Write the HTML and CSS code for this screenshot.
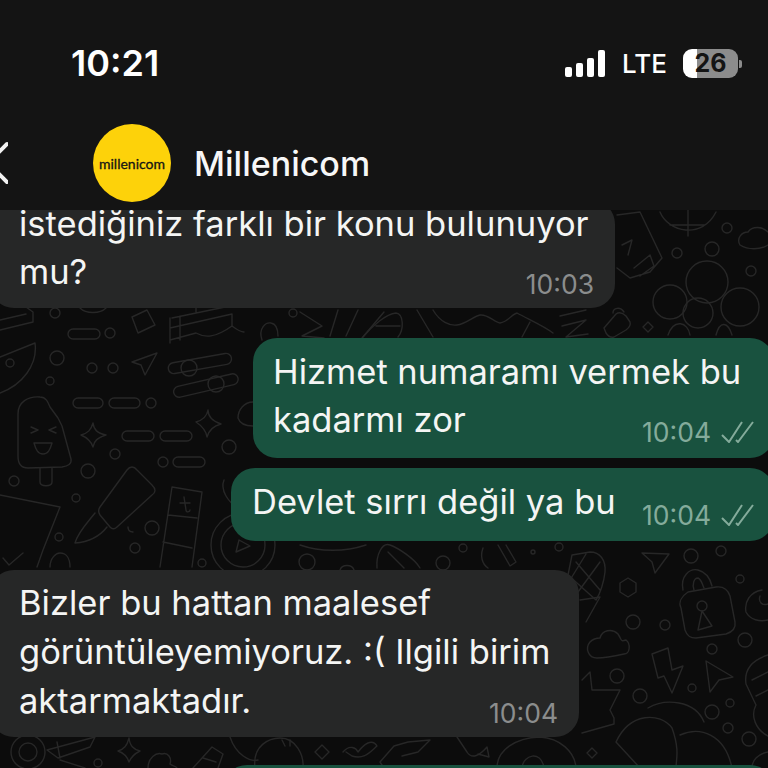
FILE: index.html
```html
<html lang="en">

<head>
  <meta charset="utf-8" />
  <title>Millenicom</title>
  <meta name="viewport" content="width=device-width, initial-scale=1" />
  <link rel="stylesheet" href="styles.css">
</head>

<body>
  <div class="screen">
    <!-- chat wallpaper, sits behind the bubbles -->
    <svg class="wallpaper" viewBox="0 0 768 768" width="768" height="768">
      <g fill="none" stroke="#272727" stroke-width="1.4" stroke-linejoin="round" stroke-linecap="round">
        <!-- left column -->
        <path d="M0 330 33 322V312L26 307M0 320 26 314" />
        <circle cx="55" cy="313" r="5" />
        <path d="M80 308C86 314 100 314 106 308" />
        <path d="M132 317 147 310 155 325 138 333Z" />
        <path d="M170 328 232 314M172 318 230 306M170 318V343M180 316V340M196 312V304M232 314V326C240 332 243 332 244 332M170 340 196 333C205 338 215 338 232 326" />
        <path d="M262 340C258 328 266 322 271 323 277 324 278 330 278 336" />
        <circle cx="293" cy="313" r="4" />
        <path d="M300 312 322 326 302 336 324 338M338 310 330 336M358 310 346 336M384 312 362 338" />
        <rect x="68" y="329" width="32" height="10" rx="5" />
        <circle cx="110" cy="333" r="5" />
        <path d="M35 343C38 365 22 385 0 393M0 357 35 343" />
        <circle cx="10" cy="363" r="4" />
        <circle cx="57" cy="358" r="7" />
        <circle cx="92" cy="368" r="5" />
        <circle cx="113" cy="368" r="5" />
        <circle cx="50" cy="381" r="4" />
        <path d="M132 362 157 353 145 375 141 365Z" />
        <rect x="168" y="358" width="64" height="11" rx="5.5" transform="rotate(-10 200 364)" />
        <circle cx="189" cy="368" r="8" />
        <rect x="173" y="380" width="66" height="11" rx="5.5" transform="rotate(-13 206 386)" />
        <circle cx="216" cy="384" r="8" />
        <rect x="73" y="398" width="30" height="10" rx="5" />
        <rect x="109" y="398" width="31" height="10" rx="5" />
        <circle cx="151" cy="403" r="5" />
        <rect x="122" y="431" width="32" height="10" rx="5" />
        <rect x="160" y="431" width="32" height="10" rx="5" />
        <rect x="173" y="457" width="32" height="10" rx="5" />
        <path d="M18 414C18 402 28 396 40 397 46 397 48 402 50 407L58 418 62 426 71 459C72 464 68 466 62 467L28 468C20 468 18 462 18 456Z" />
        <path d="M40 468V482C40 487 52 487 52 482V468" />
        <path d="M31 427 38 430 31 433M56 427 49 430 56 433" />
        <path d="M34 443H52C50 450 48 454 43 454 38 454 36 450 34 443Z" />
        <path d="M93 423C94 430 97 433 106 435 97 438 94 441 93 447 91 441 88 438 81 435 88 433 91 430 93 423Z" />
        <path d="M208 410C208 417 212 421 221 424 213 426 209 430 207 437 206 430 202 426 196 422 203 420 207 416 208 410Z" />
        <path d="M253 402C244 402 238 410 238 418 240 424 246 426 253 426" />
        <circle cx="115" cy="454" r="5" />
        <circle cx="229" cy="447" r="7" />
        <circle cx="163" cy="462" r="5" />
        <circle cx="88" cy="471" r="7" />
        <circle cx="14" cy="481" r="5" />
        <circle cx="76" cy="498" r="4" />
        <path d="M100 507 127 470C130 466 134 466 137 470L152 485C156 489 156 492 152 495L117 527C114 530 112 529 110 527L100 515C98 512 98 510 100 507Z" />
        <path d="M95 513C88 522 78 532 75 543 88 542 100 536 107 527" />
        <path d="M128 527C128 530 130 532 133 532" />
        <path d="M172 487 202 492 192 567M172 487 160 567M168 515 197 518M163 542 192 548" />
        <path d="M184 497 186 510C186 513 190 512 190 510M180 503H190" />
        <circle cx="152" cy="528" r="7" />
        <circle cx="135" cy="548" r="5" />
        <circle cx="59" cy="537" r="4" />
        <path d="M0 495 60 507 43 550 37 567M3 558 9 565 23 553" />
        <path d="M50 567C50 558 56 553 60 553 66 553 70 558 70 567" />
        <path d="M224 480C220 490 228 502 238 508" />
        <circle cx="243" cy="545" r="32" />
        <circle cx="243" cy="545" r="22" />
        <path d="M236 552 239 540 250 546Z" />
        <circle cx="202" cy="563" r="4" />

        <!-- middle strips -->
        <path d="M363 337C372 326 386 314 396 313 404 314 404 330 398 337M376 326H400" />
        <path d="M417 310 433 337M433 310C440 322 450 326 457 325 466 324 474 316 480 315 488 314 494 322 500 323 508 322 512 314 517 313 530 320 544 326 553 333M530 322 522 337" />
        <path d="M560 316 586 310M562 326 586 320 566 337 588 334" />
        <circle cx="307" cy="562" r="8" />
        <path d="M340 570C342 564 352 564 354 570" />
        <path d="M377 568C376 555 382 542 390 545 398 548 414 558 420 568M388 552 404 568" />
        <circle cx="443" cy="563" r="7" />
        <circle cx="463" cy="548" r="4" />
        <path d="M483 548C480 556 482 564 488 568M498 545 510 566 516 562 506 545" />
        <circle cx="533" cy="552" r="2" />
        <circle cx="559" cy="547" r="4" />
        <path d="M300 545C320 552 345 552 366 545" />

        <!-- right of the first bubble -->
        <path d="M660 212C668 232 702 240 716 212M688 210V236M670 225 705 225" />
        <path d="M617 215 640 212 662 258 650 272 630 278 617 268M622 245 632 240 628 255M634 268 650 255 654 266 640 276" />
        <circle cx="727" cy="228" r="5" />
        <circle cx="712" cy="249" r="7" />
        <circle cx="677" cy="253" r="5" />
        <circle cx="751" cy="271" r="5" />
        <path d="M740 245C736 238 742 232 748 232 752 226 762 226 768 232M740 245C748 250 760 250 768 245" />
        <circle cx="707" cy="282" r="21" />
        <circle cx="670" cy="302" r="17" />
        <circle cx="698" cy="313" r="15" />
        <circle cx="740" cy="307" r="19" />
        <path d="M668 335C674 318 688 322 690 335M716 335C720 320 728 322 732 335" />
        <path d="M604 328 616 314C620 311 623 313 626 316L630 322C631 325 630 327 626 330L614 337C610 338 608 336 606 333ZM613 313C613 308 620 306 624 312" />
        <path d="M648 322 653 327 648 332 643 327Z" />

        <!-- lower right -->
        <path d="M590 552C600 552 606 560 605 572 604 582 600 594 596 600L568 575 572 555ZM576 562 600 590M586 554 570 580M600 562 578 592" />
        <path d="M580 600 600 597 586 622" />
        <path d="M642 553 669 554 655 573 652 562Z" />
        <circle cx="691" cy="556" r="7" />
        <circle cx="721" cy="551" r="5" />
        <path d="M628 578 636 583 636 592 628 597 620 592 620 583Z" />
        <path d="M681 608C678 602 682 596 688 592L716 587C724 586 728 590 730 596L735 622C736 628 732 632 726 634L696 638C690 638 687 636 685 630Z" />
        <path d="M683 590C680 576 690 568 698 570 706 572 710 578 712 586M694 590C692 584 694 578 698 578 702 580 702 584 704 588" />
        <circle cx="702" cy="606" r="5" />
        <path d="M702 611 712 626 698 630Z" />
        <circle cx="633" cy="622" r="7" />
        <circle cx="665" cy="625" r="5" />
        <circle cx="745" cy="640" r="7" />
        <circle cx="712" cy="649" r="5" />
        <circle cx="740" cy="579" r="4" />
        <path d="M762 590C750 592 744 602 746 612 750 620 760 622 768 620M768 604C762 606 758 602 760 596" />
        <path d="M597 658C588 658 585 648 590 642 594 638 598 638 600 638 602 630 612 628 618 634 622 640 620 642 626 640 631 644 630 654 624 654 615 656 606 658 597 658Z" />
        <path d="M652 654 668 648 672 670 683 666 672 693 664 676 658 678Z" />
        <path d="M706 661 733 677 719 680 710 692Z" />
        <circle cx="617" cy="676" r="7" />
        <circle cx="640" cy="696" r="7" />
        <circle cx="692" cy="688" r="4" />
        <circle cx="730" cy="703" r="4" />
        <circle cx="712" cy="712" r="7" />
        <circle cx="728" cy="728" r="5" />
        <circle cx="749" cy="739" r="7" />
        <path d="M592 748 597 753 592 758 587 753Z" />
        <path d="M582 680 590 672 592 690 606 690 620 690 610 710 614 718 614 724 582 733" />
        <path d="M616 742C630 712 660 712 672 728 680 750 676 760 676 768M616 742 640 768" />
        <path d="M648 708C665 698 695 700 704 722M680 735C700 726 725 734 732 768" />
        <path d="M768 655C752 660 744 670 746 684L756 705C750 716 756 730 768 736M752 680 768 672M756 696 768 690" />
        <path d="M768 752C758 754 752 760 752 768" />

        <!-- bottom strip -->
        <circle cx="28" cy="752" r="9" />
        <circle cx="28" cy="752" r="17" />
        <path d="M47 750 95 737 90 747 58 758 47 750ZM57 742 60 758M60 760 85 768" />
        <path d="M129 738C130 746 133 749 140 751 134 754 131 757 129 762 127 756 124 753 118 751 124 749 127 746 129 738Z" />
        <circle cx="98" cy="763" r="4" />
        <path d="M148 768C148 758 156 752 162 754 168 752 172 758 170 764 172 766 176 766 177 768" />
        <path d="M193 768 212 747 223 754 218 768M203 758 216 762" />
        <path d="M230 737C236 755 250 762 258 760" />
        <path d="M255 768C252 745 270 738 280 738 296 738 304 755 303 768" />
        <path d="M282 740 285 746M290 740V746" />
        <path d="M322 745 329 752 322 759 315 752Z" />
        <path d="M343 752C350 744 356 748 358 752 364 744 372 738 377 746 370 752 364 760 352 756L346 752M384 768 380 762 394 746 408 742 430 740 418 752 402 756" />
        <path d="M457 737 467 752C472 760 480 755 487 747L489 757 478 754" />
        <path d="M497 768C497 750 515 738 540 737 560 738 575 752 576 768" />
        <path d="M522 767C524 755 540 750 544 767" />
      </g>
    </svg>

    <header class="topbar">
      <div class="status">
        <span class="clock">10:21</span>
        <div class="status-right">
          <div class="signal">
            <i class="s1"></i>
            <i class="s2"></i>
            <i class="s3"></i>
            <i class="s4"></i>
          </div>
          <span class="net">LTE</span>
          <div class="battery"><span>26</span></div>
        </div>
      </div>
      <div class="nav">
        <svg class="back" viewBox="0 0 8 44" width="8" height="44">
          <path d="M7 3-12 22 7 41" fill="none" stroke="#f2f2f2" stroke-width="4" stroke-linecap="round" />
        </svg>
        <div class="avatar"><span>millenicom</span></div>
        <span class="name">Millenicom</span>
      </div>
    </header>

    <main class="chat">
      <div class="bubble in first">
        istediğiniz farklı bir konu bulunuyor<br>mu?
        <span class="meta">10:03</span>
      </div>
      <div class="bubble out second">
        Hizmet numaramı vermek bu<br>kadarmı zor
        <span class="meta">10:04
          <svg class="ticks" viewBox="0 0 33 22" width="33" height="22">
            <path d="M1 14 8 21 21 1M15 19 17 21 32 1" fill="none" stroke="#84ab9b" stroke-width="2" />
          </svg>
        </span>
      </div>
      <div class="bubble out third">
        Devlet sırrı değil ya bu
        <span class="meta">10:04
          <svg class="ticks" viewBox="0 0 33 22" width="33" height="22">
            <path d="M1 14 8 21 21 1M15 19 17 21 32 1" fill="none" stroke="#84ab9b" stroke-width="2" />
          </svg>
        </span>
      </div>
      <div class="bubble in fourth">
        Bizler bu hattan maalesef<br>görüntüleyemiyoruz. :( Ilgili birim<br>aktarmaktadır.
        <span class="meta">10:04</span>
      </div>
      <div class="bubble out fifth"></div>
    </main>
  </div>
</body>

</html>
```

FILE: styles.css
```css
* {
  box-sizing: border-box;
}

html,
body {
  margin: 0;
  height: 100%;
  overflow: hidden;
  background: #0c0c0c;
}

body {
  font-family: Inter, 'Liberation Sans', sans-serif;
  color: #f4f5f4;
}

.screen {
  position: relative;
  width: 768px;
  height: 768px;
  overflow: hidden;
}

.wallpaper {
  position: absolute;
  top: 0;
  left: 0;
}

.topbar {
  position: relative;
  z-index: 2;
  height: 210px;
  background: #141414;
}

.status {
  display: flex;
  justify-content: space-between;
  align-items: center;
  height: 126px;
  padding: 0 30px 0 71px;
}

.clock {
  font-size: 36px;
  font-weight: 600;
  color: #fff;
}

.status-right {
  display: flex;
  align-items: center;
}

.signal {
  display: flex;
  align-items: flex-end;
  gap: 3.5px;
  height: 27px;
  margin: 1px 17px 0 0;
}

.signal i {
  display: block;
  width: 7.5px;
  background: #fff;
  border-radius: 2px;
}

.s1 {
  height: 10px;
}

.s2 {
  height: 14px;
}

.s3 {
  height: 19px;
}

.s4 {
  height: 27px;
}

.net {
  margin-right: 16px;
  font-size: 26px;
  font-weight: 500;
  color: #fff;
}

.battery {
  position: relative;
  width: 55px;
  height: 29px;
  border-radius: 9px;
  background: linear-gradient(90deg, #fff 14px, #8c8c8c 14px);
  text-align: center;
  font-size: 25px;
  font-weight: 700;
  line-height: 29px;
  color: #141414;
}

.battery::after {
  content: '';
  position: absolute;
  top: 11px;
  right: -4px;
  width: 3px;
  height: 8px;
  border-radius: 0 2px 2px 0;
  background: #8c8c8c;
}

.nav {
  display: flex;
  align-items: center;
  height: 78px;
  margin-top: -2px;
}

.back {
  flex: none;
}

.avatar {
  display: flex;
  align-items: center;
  justify-content: center;
  width: 78px;
  height: 78px;
  margin-left: 85px;
  border-radius: 50%;
  background: #fdd20a;
}

.avatar span {
  font-family: Lato, sans-serif;
  font-size: 14px;
  font-weight: 400;
  color: #141414;
  -webkit-text-stroke: 0.3px #141414;
}

.name {
  margin-left: 23px;
  font-size: 34px;
  font-weight: 500;
  color: #f7f7f7;
}

.chat {
  position: relative;
  z-index: 1;
  display: flex;
  flex-direction: column;
  margin-top: -10px;
  font-size: 34.5px;
  line-height: 48px;
}

.bubble {
  position: relative;
  flex: none;
  background: #262727;
  border-radius: 24px;
}

.in {
  align-self: flex-start;
  margin-left: -10px;
  padding-left: 29px;
}

.out {
  align-self: flex-end;
  margin-right: -6px;
  background: #19523f;
}

.first {
  width: 625px;
  height: 108px;
}

.second {
  width: 521px;
  height: 120px;
  margin-top: 30px;
  padding: 10px 0 0 20px;
}

.third {
  width: 543px;
  height: 73px;
  margin-top: 10px;
  padding: 10px 0 0 21px;
}

.fourth {
  width: 589px;
  height: 167px;
  margin-top: 29px;
  padding-top: 8px;
  line-height: 49px;
}

.fifth {
  width: 551px;
  height: 60px;
  margin-top: 28px;
}

.meta {
  position: absolute;
  right: 21px;
  bottom: 9px;
  display: flex;
  align-items: center;
  gap: 10px;
  font-size: 26.5px;
  line-height: 30px;
  font-weight: 400;
  color: #8b8d8d;
}

.out .meta {
  right: 20px;
  bottom: 11px;
  color: #84ab9b;
}

.ticks {
  flex: none;
}
```
